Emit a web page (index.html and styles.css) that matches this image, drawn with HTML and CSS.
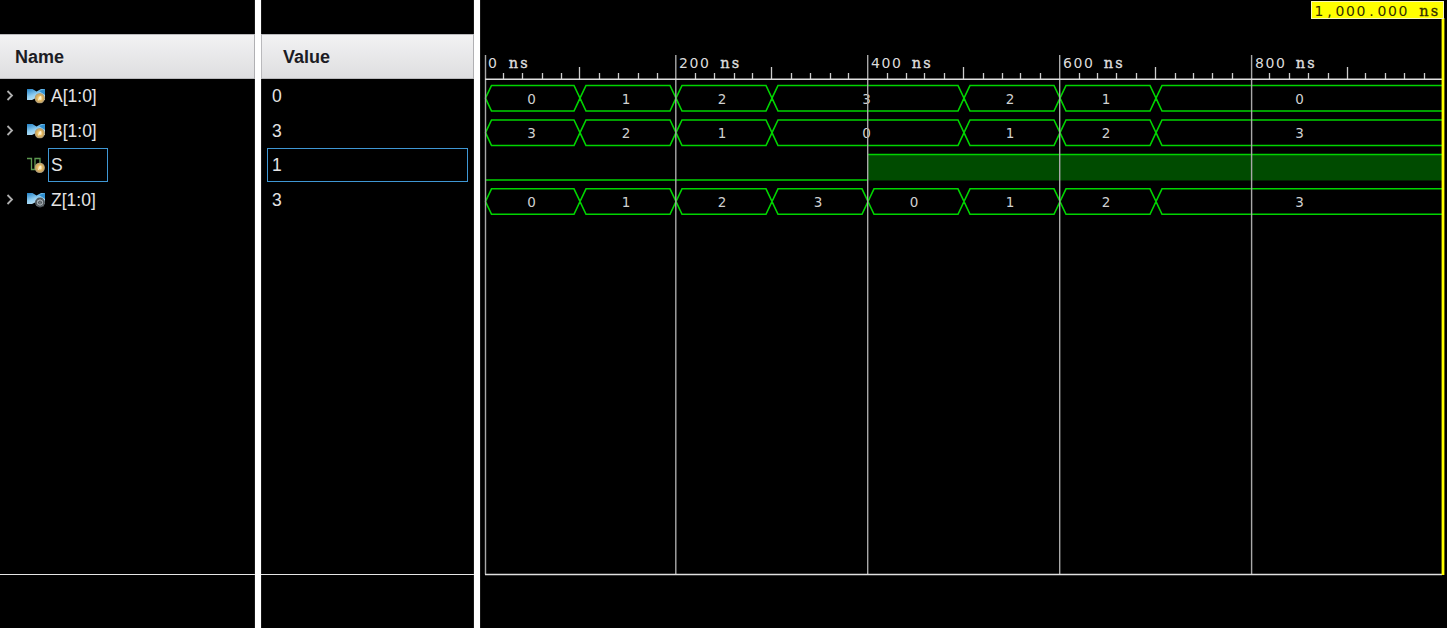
FILE: index.html
```
<!DOCTYPE html>
<html lang="en">
<head>
<meta charset="utf-8">
<title>Waveform viewer</title>
<link rel="stylesheet" href="styles.css">
</head>
<body>
<svg class="defs" width="0" height="0" aria-hidden="true">
  <defs>
    <linearGradient id="blue" x1="0" y1="0" x2=".6" y2="1"><stop offset="0" stop-color="#1f7fc4"/><stop offset=".55" stop-color="#8fcdf0"/><stop offset="1" stop-color="#c4e6f7"/></linearGradient>
    <radialGradient id="gold"><stop offset="0" stop-color="#fff2c2"/><stop offset=".5" stop-color="#e6b759"/><stop offset="1" stop-color="#a89878"/></radialGradient>
    <symbol id="bus" viewBox="0 0 20 18"><path d="M1 2h5.500l4 2.500L15 2h4v11h-8L9 11.500 6 13H1z" fill="url(#blue)"/><path d="M13 4l6-2v6z" fill="#2f8fd0"/></symbol>
    <symbol id="badge" viewBox="0 0 10 10"><circle cx="5" cy="5" r="4.900" fill="url(#gold)"/><path d="M3.800 7l1.800-4M6 3v3.500" stroke="#fff5d8" fill="none"/></symbol>
  </defs>
</svg>
<main class="viewer">
  <section class="panel names">
    <header class="head">Name</header>
    <div class="rows">
      <div class="row"><svg class="chev" viewBox="0 0 8 12"><path d="M1.500 1L6 5.500 1.500 10"/></svg><svg class="icon" viewBox="0 0 20 18"><use href="#bus" width="20" height="18"/><use href="#badge" x="8.500" y="6" width="10.500" height="10.500"/></svg><span class="label">A[1:0]</span></div>
      <div class="row"><svg class="chev" viewBox="0 0 8 12"><path d="M1.500 1L6 5.500 1.500 10"/></svg><svg class="icon" viewBox="0 0 20 18"><use href="#bus" width="20" height="18"/><use href="#badge" x="8.500" y="6" width="10.500" height="10.500"/></svg><span class="label">B[1:0]</span></div>
      <div class="row"><span class="chev"></span><svg class="icon" viewBox="0 0 20 18"><path d="M1 2.500h4.500v11h3.500v-11h5v5" fill="none" stroke="#5d9950" stroke-width="1.300"/><use href="#badge" x="8.500" y="6.500" width="10.500" height="10.500"/></svg><span class="label selected">S</span></div>
      <div class="row"><svg class="chev" viewBox="0 0 8 12"><path d="M1.500 1L6 5.500 1.500 10"/></svg><svg class="icon" viewBox="0 0 20 18"><use href="#bus" width="20" height="18"/><circle cx="14" cy="11.500" r="5" fill="#50575c"/><circle cx="14" cy="11.500" r="2.600" fill="none" stroke="#bfc6ca"/><path d="M10.500 15l7-7M10.500 8.500l7 6.500" stroke="#8d969c" stroke-width=".7"/></svg><span class="label">Z[1:0]</span></div>
    </div>
    <footer class="foot"></footer>
  </section>
  <div class="divider"></div>
  <section class="panel values">
    <header class="head">Value</header>
    <div class="rows">
      <div class="row"><span class="value">0</span></div>
      <div class="row"><span class="value">3</span></div>
      <div class="row"><span class="value selected">1</span></div>
      <div class="row"><span class="value">3</span></div>
    </div>
    <footer class="foot"></footer>
  </section>
  <div class="divider"></div>
  <svg class="wave" viewBox="480 0 967 628">
    <g class="digits signal-values">
      <g><text x="531.500" y="103.500">0</text><text x="626" y="103.500">1</text><text x="722" y="103.500">2</text><text x="866.500" y="103.500">3</text><text x="1010" y="103.500">2</text><text x="1106" y="103.500">1</text><text x="1299.500" y="103.500">0</text></g>
      <g><text x="531.500" y="138">3</text><text x="626" y="138">2</text><text x="722" y="138">1</text><text x="866.500" y="138">0</text><text x="1010" y="138">1</text><text x="1106" y="138">2</text><text x="1299.500" y="138">3</text></g>
      <g><text x="531.500" y="207">0</text><text x="626" y="207">1</text><text x="722" y="207">2</text><text x="818" y="207">3</text><text x="914" y="207">0</text><text x="1010" y="207">1</text><text x="1106" y="207">2</text><text x="1299.500" y="207">3</text></g>
    </g>
    <rect class="high" x="868" y="154" width="574" height="26.500"/>
    <g class="trace">
      <path d="M485.500 98.200l6-12.700H574l6 12.700-6 12.800H491.500zM580 98.200l6-12.700H670l6 12.700-6 12.800H586zM676 98.200l6-12.700H766l6 12.700-6 12.800H682zM772 98.200l6-12.700H958l6 12.700-6 12.800H778zM964 98.200l6-12.700H1054l6 12.700-6 12.800H970zM1060 98.200l6-12.700H1150l6 12.700-6 12.800H1066zM1442 85.500H1162l-6 12.700 6 12.800H1442"/>
      <path d="M485.500 132.700l6-12.700H574l6 12.700-6 12.800H491.500zM580 132.700l6-12.700H670l6 12.700-6 12.800H586zM676 132.700l6-12.700H766l6 12.700-6 12.800H682zM772 132.700l6-12.700H958l6 12.700-6 12.800H778zM964 132.700l6-12.700H1054l6 12.700-6 12.800H970zM1060 132.700l6-12.700H1150l6 12.700-6 12.800H1066zM1442 120H1162l-6 12.700 6 12.800H1442"/>
      <path d="M485 180H867.500M867.500 154.500H1442"/>
      <path d="M485.500 201.500l6-12.700H574l6 12.700-6 12.800H491.500zM580 201.500l6-12.700H670l6 12.700-6 12.800H586zM676 201.500l6-12.700H766l6 12.700-6 12.800H682zM772 201.500l6-12.700H862l6 12.700-6 12.800H778zM868 201.500l6-12.700H958l6 12.700-6 12.800H874zM964 201.500l6-12.700H1054l6 12.700-6 12.800H970zM1060 201.500l6-12.700H1150l6 12.700-6 12.800H1066zM1442 188.800H1162l-6 12.700 6 12.800H1442"/>
    </g>
    <path class="grid" d="M485.500 55V574.500M675.800 55V574.500M867.700 55V574.500M1059.700 55V574.500M1251.600 55V574.500"/>
    <path class="ticks" d="M503.500 73v6M522.500 73v6M542.500 73v6M561.500 73v6M579.500 67v12M599.500 73v6M618.500 73v6M638.500 73v6M657.500 73v6M695.500 73v6M714.500 73v6M734.500 73v6M752.500 73v6M771.500 67v12M791.500 73v6M810.500 73v6M830.500 73v6M848.500 73v6M887.500 73v6M906.500 73v6M924.500 73v6M944.500 73v6M963.500 67v12M983.500 73v6M1002.500 73v6M1020.500 73v6M1040.500 73v6M1079.500 73v6M1097.500 73v6M1116.500 73v6M1136.500 73v6M1155.500 67v12M1175.500 73v6M1193.500 73v6M1212.500 73v6M1232.500 73v6M1269.500 73v6M1289.500 73v6M1308.500 73v6M1328.500 73v6M1347.500 67v12M1365.500 73v6M1385.500 73v6M1404.500 73v6M1424.500 73v6"/>
    <path class="axis" d="M485 79.300H1442M485 574.500H1442"/>
    <g class="digits time">
      <text y="68"><tspan x="492.500">0</tspan><tspan class="unit" x="513.500 524">ns</tspan></text>
      <text y="68"><tspan x="683.500 694 704.500">200</tspan><tspan class="unit" x="725 735.500">ns</tspan></text>
      <text y="68"><tspan x="875.500 886 896.500">400</tspan><tspan class="unit" x="916.500 927">ns</tspan></text>
      <text y="68"><tspan x="1067.500 1078 1088.500">600</tspan><tspan class="unit" x="1108.500 1119">ns</tspan></text>
      <text y="68"><tspan x="1259.500 1270 1280.500">800</tspan><tspan class="unit" x="1300.500 1311">ns</tspan></text>
    </g>
    <path class="cursor" d="M1443 18V575"/>
    <rect class="flag" x="1311.500" y="1.500" width="132" height="17"/>
    <text class="digits flag-text" y="15.500"><tspan x="1319 1329.500 1340 1350.500 1361 1371.500 1382 1392.500 1403">1,000.000</tspan><tspan class="unit" x="1424 1434.500">ns</tspan></text>
  </svg>
</main>
</body>
</html>
```
FILE: styles.css
```
* { box-sizing: border-box; }
body { margin: 0; background: #000; font-family: "Liberation Sans", sans-serif; font-size: 17.5px; color: #e4e4e4; overflow: hidden; }
.defs { display: block; height: 0; }
.viewer { display: grid; grid-template-columns: 255px 6px 213px 6px 967px; width: 1447px; height: 628px; }
.panel { display: flex; flex-direction: column; min-width: 0; padding-top: 34px; }
.head { height: 45px; padding-left: 15px; border: 1px solid #b9b9bc; border-left: 0; background: linear-gradient(#f2f2f3, #dedee0); color: #1c1c24; font-size: 18px; font-weight: bold; line-height: 44px; }
.values .head { padding-left: 21px; border-left: 1px solid #b9b9bc; }
.divider { background: #fff; box-shadow: 0 0 1px #888; }
.rows { flex: 1; border-bottom: 1px solid #e5e5e5; }
.row { display: flex; align-items: center; height: 34.5px; }
.names .row { padding-left: 6px; }
.chev { width: 8px; height: 12px; margin-right: 12px; fill: none; stroke: #b0b0b0; stroke-width: 1.8; }
.icon { width: 20px; height: 18px; }
.label { height: 34px; margin-left: 2px; padding-left: 2px; border: 1px solid transparent; line-height: 33px; }
.label.selected { width: 60px; border-color: #3f97d4; }
.value { width: 201px; height: 34px; margin-left: 6px; padding-left: 4px; border: 1px solid transparent; line-height: 33px; }
.value.selected { border-color: #3f97d4; }
.foot { height: 53px; }
.wave { display: block; width: 967px; height: 628px; }
.digits { font-family: "DejaVu Sans", sans-serif; font-size: 14px; text-anchor: middle; fill: #dcdcdc; }
.unit { font-family: "DejaVu Serif", serif; font-size: 14.5px; stroke: currentColor; stroke-width: .3px; }
.signal-values { font-size: 13.5px; fill: #d0d0d0; }
.trace { fill: none; stroke: #00d400; stroke-width: 1.6; }
.high { fill: #004b00; }
.grid { stroke: #a8a8a8; stroke-width: 1.4; }
.ticks { stroke: #ccc; stroke-width: 1.3; }
.axis { stroke: #e0e0e0; stroke-width: 1.6; }
.cursor { stroke: #ff0; stroke-width: 2.8; }
.flag { fill: #ff0; stroke: #f7f7b8; }
.flag-text { fill: #333000; color: #333000; }
```
